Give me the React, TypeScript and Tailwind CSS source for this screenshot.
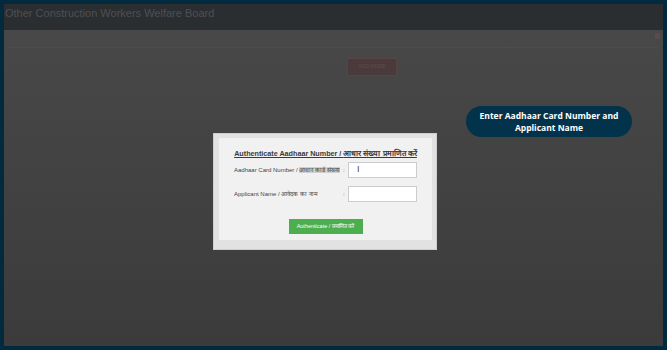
const App = () => {
  return (
    <div className="w-[667px] h-[350px] bg-[#022a3e] p-[4px] overflow-hidden font-['Liberation_Sans',Arial,sans-serif]">
      <div className="relative w-full h-full flex flex-col">
        {/* top bar */}
        <div className="h-[26px] bg-[#2b2e30] px-[1px] pt-[2px] text-[11px] text-[#4d5053] leading-[14px]">
          Other Construction Workers Welfare Board
        </div>
        {/* dimmed page */}
        <div className="flex-1 bg-gradient-to-b from-[#484848] to-[#3b3b3b] flex flex-col">
          <div className="h-[18px] border-b border-[#4d4d4d] mx-[4px]" />
          <div className="flex pt-[10px] pl-[343px]">
            <div className="w-[50px] h-[18px] bg-[#4a3a3b] border border-[#574445] text-[5px] text-[#5e4c4d] flex items-center justify-center">
              ADD MORE
            </div>
          </div>
        </div>

        {/* close mark */}
        <div className="absolute right-[3px] top-[29px] w-[5px] h-[6px] bg-[#5a4a4c]" />

        {/* modal */}
        <div className="absolute left-[209px] top-[129px] w-[224px] h-[117px] bg-[#e2e2e2] border border-[#cfcfcf] pl-[5px] pr-[4px] pt-[4px] pb-[9px]">
          <div className="w-full h-full bg-[#f1f1f1] flex flex-col items-center">
            <div className="mt-[10px] text-[7.2px] font-bold underline text-[#3a3a3a] leading-[11px] whitespace-nowrap">
              Authenticate Aadhaar Number / <span className="text-[7.8px]">आधार संख्या प्रमाणित करें</span>
            </div>
            <div className="w-full flex flex-col gap-[8px] mt-[3px] pl-[15px] text-[6px] text-[#444] leading-[9px]">
              <div className="flex items-center">
                <div className="w-[109px] whitespace-nowrap">
                  Aadhaar Card Number / <span className="bg-[#cfcfcf]">आधार कार्ड संख्या</span>
                </div>
                <div className="w-[5px]">:</div>
                <div className="relative w-[69px] h-[16px] bg-white border border-[#cccccc]">
                  <span className="absolute left-[8px] top-[1px] text-[9px] text-[#444] leading-[10px]">I</span>
                </div>
              </div>
              <div className="flex items-center">
                <div className="w-[109px] whitespace-nowrap">Applicant Name / आवेदक का नाम</div>
                <div className="w-[5px]">:</div>
                <div className="w-[69px] h-[16px] bg-white border border-[#cccccc]" />
              </div>
            </div>
            <div className="mt-[17px] w-[74px] h-[15px] bg-[#4cae4f] text-white text-[5.5px] flex items-center justify-center whitespace-nowrap">
              Authenticate / प्रमाणित करें
            </div>
          </div>
        </div>

        {/* callout */}
        <div className="absolute left-[462px] top-[102px] w-[166px] h-[31px] rounded-full bg-[#03334b] text-white text-[8.5px] font-bold leading-[12px] flex items-center justify-center text-center font-['Open_Sans',sans-serif]">
          Enter Aadhaar Card Number and
          <br />
          Applicant Name
        </div>
      </div>
    </div>
  )
}

export default App
